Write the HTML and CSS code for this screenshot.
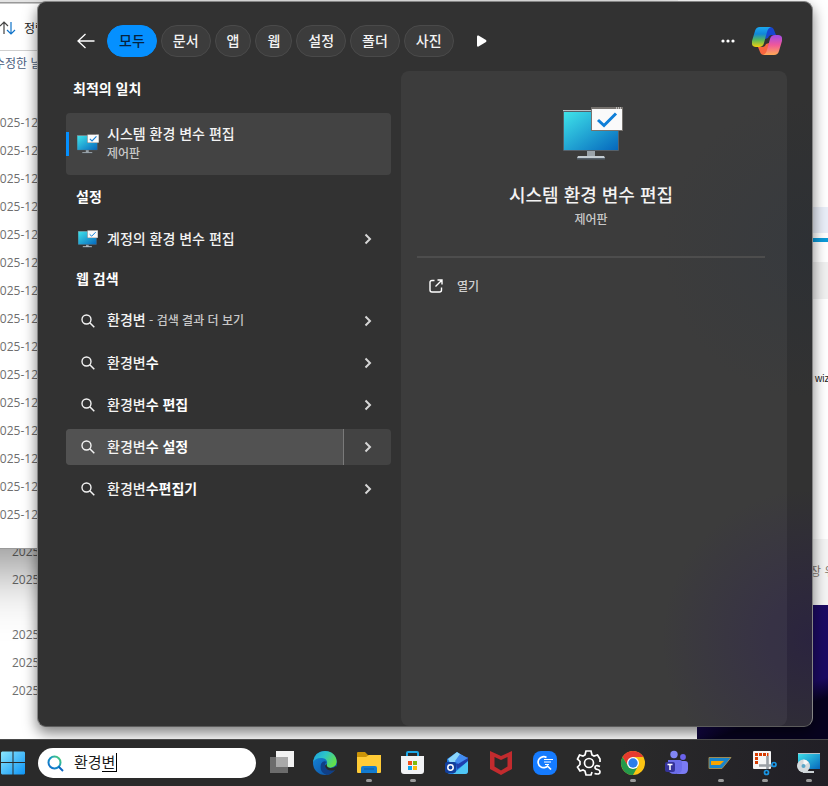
FILE: index.html
```html
<!DOCTYPE html>
<html lang="ko">
<head>
    <meta charset="UTF-8">
    <meta name="viewport" content="width=device-width, initial-scale=1.0">
    <title>검색</title>
    <link rel="stylesheet" href="styles.css">
</head>
<body>
    <!-- shared icons -->
    <svg class="sprite" aria-hidden="true">
        <defs>
            <linearGradient id="screenFill" x1="0" y1="0" x2="1" y2="1">
                <stop offset="0" stop-color="#3fe3ea"/>
                <stop offset="1" stop-color="#0567bd"/>
            </linearGradient>
        </defs>
        <symbol id="icon-monitor" viewBox="0 0 60 54">
            <rect x="24" y="43" width="8" height="7" fill="#9aa3aa"/>
            <path d="M15 49h26l1 2H14z" fill="#c3ccd3"/>
            <path d="M14 51h28v1.500H14z" fill="#55606a"/>
            <rect x="0" y="3" width="56" height="41" rx="1" fill="#55606a"/>
            <rect x="0" y="3" width="56" height="1" fill="#b9c0c5"/>
            <rect x="1" y="5" width="54" height="38" fill="url(#screenFill)"/>
            <rect x="28" y="0" width="32" height="24" fill="#77736f"/>
            <rect x="29" y="2" width="30" height="21" fill="#fafafa"/>
            <path d="M53 1h1M55 1h1M57 1h1" stroke="#fff"/>
            <path d="M35 13l6 5.500L53 6.500" fill="none" stroke="#0f7fd8" stroke-width="3"/>
        </symbol>
        <symbol id="icon-search" viewBox="0 0 14 14">
            <circle cx="5.500" cy="5.500" r="4.500" fill="none" stroke="currentColor" stroke-width="1.400"/>
            <path d="M8.800 8.800l4.500 4.500" stroke="currentColor" stroke-width="1.500"/>
        </symbol>
        <symbol id="icon-chevron" viewBox="0 0 8 12">
            <path d="M1.500 1.500L6 6l-4.500 4.500" fill="none" stroke="currentColor" stroke-width="2"/>
        </symbol>
    </svg>

    <div class="desktop">
        <main class="workspace">
            <!-- windows behind the search panel -->
            <section class="window window-back">
                <ul class="dates">
                    <li>2025-12</li>
                    <li>2025-12</li>
                </ul>
                <ul class="dates">
                    <li>2025-12</li>
                    <li>2025-12</li>
                    <li>2025-12</li>
                </ul>
            </section>
            <section class="window window-files">
                <div class="toolbar">
                    <svg width="18" height="14" viewBox="0 0 18 14" fill="none" stroke-width="1.200">
                        <path d="M5 13V1M1 5l4-4 4 4" stroke="#444"/>
                        <path d="M12 1v12M8 9l4 4 4-4" stroke="#0f73c9"/>
                    </svg>
                    <span>정렬</span>
                </div>
                <div class="column-title">수정한 날짜</div>
                <ul class="dates">
                    <li>2025-12</li>
                    <li>2025-12</li>
                    <li>2025-12</li>
                    <li>2025-12</li>
                    <li>2025-12</li>
                    <li>2025-12</li>
                    <li>2025-12</li>
                    <li>2025-12</li>
                    <li>2025-12</li>
                    <li>2025-12</li>
                    <li>2025-12</li>
                    <li>2025-12</li>
                    <li>2025-12</li>
                    <li>2025-12</li>
                    <li>2025-12</li>
                </ul>
            </section>
            <section class="window window-browser">
                <div class="address"></div>
                <div class="accent"></div>
                <div class="tabstrip"></div>
                <p class="page-text">wiz</p>
                <p class="status">장 위</p>
            </section>

            <section class="search-panel">
                <header class="panel-header">
                    <button class="icon-btn back" aria-label="뒤로">
                        <svg width="18" height="16" viewBox="0 0 18 16" fill="none" stroke="#fff" stroke-width="1.300"><path d="M17.500 8H1M8.500 1L1 8l7.500 7"/></svg>
                    </button>
                    <nav class="tabs">
                        <button class="tab active">모두</button>
                        <button class="tab">문서</button>
                        <button class="tab">앱</button>
                        <button class="tab">웹</button>
                        <button class="tab">설정</button>
                        <button class="tab">폴더</button>
                        <button class="tab">사진</button>
                    </nav>
                    <button class="icon-btn more-tabs" aria-label="더 보기">
                        <svg width="10" height="12" viewBox="0 0 10 12"><path d="M1.500.500L9 5q1 1 0 2l-7.500 4.500Q0 12 0 10.500v-9Q0 0 1.500.500z" fill="#fff"/></svg>
                    </button>
                    <button class="icon-btn options" aria-label="옵션">
                        <svg width="14" height="4" viewBox="0 0 14 4" fill="#fff"><circle cx="2" cy="2" r="1.600"/><circle cx="7" cy="2" r="1.600"/><circle cx="12" cy="2" r="1.600"/></svg>
                    </button>
                    <button class="icon-btn" aria-label="Copilot">
                        <svg width="30" height="28" viewBox="0 0 30 28">
                            <defs>
                                <linearGradient id="cpLeft" x1="0" y1="0" x2="0" y2="1">
                                    <stop offset="0" stop-color="#1ba8f0"/><stop offset=".35" stop-color="#1187d8"/>
                                    <stop offset=".65" stop-color="#57b85b"/><stop offset="1" stop-color="#f5cf0c"/>
                                </linearGradient>
                                <linearGradient id="cpRight" x1="0" y1="0" x2="0" y2="1">
                                    <stop offset="0" stop-color="#a04be8"/><stop offset=".5" stop-color="#f0589a"/>
                                    <stop offset="1" stop-color="#ffab55"/>
                                </linearGradient>
                            </defs>
                            <path d="M14 0h4q3 0 4 3l2 5h-4q-3 0-4 3l-3 1z" fill="#1746d0"/>
                            <path d="M16 28h-4q-3 0-4-3l-2-5h4q3 0 4-3l3-1z" fill="#f9663f"/>
                            <path d="M8 0h11q-3 1-4 5l-3 11q-1 4-5 4H4q-5 0-4-6L3 4q1-4 5-4z" fill="url(#cpLeft)"/>
                            <path d="M22 28H11q3-1 4-5l3-11q1-4 5-4h3q5 0 4 6l-3 10q-1 4-5 4z" fill="url(#cpRight)"/>
                        </svg>
                    </button>
                </header>

                <div class="panel-body">
                    <div class="results">
                        <h2>최적의 일치</h2>
                        <button class="best-match">
                            <span class="item-icon"><svg width="22" height="20"><use href="#icon-monitor"/></svg></span>
                            <span class="item-text">
                                <span class="item-name">시스템 환경 변수 편집</span>
                                <span class="item-type">제어판</span>
                            </span>
                        </button>

                        <h2 class="indent">설정</h2>
                        <ul class="result-list">
                            <li class="result">
                                <button class="result-main"><span class="item-icon"><svg width="20" height="18"><use href="#icon-monitor"/></svg></span><span class="item-name">계정의 환경 변수 편집</span></button>
                                <button class="result-more" aria-label="자세히"><svg width="8" height="12"><use href="#icon-chevron"/></svg></button>
                            </li>
                        </ul>

                        <h2 class="indent">웹 검색</h2>
                        <ul class="result-list">
                            <li class="result">
                                <button class="result-main"><span class="item-icon"><svg width="14" height="14"><use href="#icon-search"/></svg></span><span class="item-name">환경변<small> - 검색 결과 더 보기</small></span></button>
                                <button class="result-more" aria-label="자세히"><svg width="8" height="12"><use href="#icon-chevron"/></svg></button>
                            </li>
                            <li class="result">
                                <button class="result-main"><span class="item-icon"><svg width="14" height="14"><use href="#icon-search"/></svg></span><span class="item-name">환경변<b>수</b></span></button>
                                <button class="result-more" aria-label="자세히"><svg width="8" height="12"><use href="#icon-chevron"/></svg></button>
                            </li>
                            <li class="result">
                                <button class="result-main"><span class="item-icon"><svg width="14" height="14"><use href="#icon-search"/></svg></span><span class="item-name">환경변<b>수 편집</b></span></button>
                                <button class="result-more" aria-label="자세히"><svg width="8" height="12"><use href="#icon-chevron"/></svg></button>
                            </li>
                            <li class="result hovered">
                                <button class="result-main"><span class="item-icon"><svg width="14" height="14"><use href="#icon-search"/></svg></span><span class="item-name">환경변<b>수 설정</b></span></button>
                                <button class="result-more" aria-label="자세히"><svg width="8" height="12"><use href="#icon-chevron"/></svg></button>
                            </li>
                            <li class="result">
                                <button class="result-main"><span class="item-icon"><svg width="14" height="14"><use href="#icon-search"/></svg></span><span class="item-name">환경변<b>수편집기</b></span></button>
                                <button class="result-more" aria-label="자세히"><svg width="8" height="12"><use href="#icon-chevron"/></svg></button>
                            </li>
                        </ul>
                    </div>

                    <aside class="preview">
                        <svg class="preview-icon" width="60" height="54"><use href="#icon-monitor"/></svg>
                        <h1>시스템 환경 변수 편집</h1>
                        <p class="item-type">제어판</p>
                        <hr>
                        <button class="open-btn">
                            <svg width="14" height="14" viewBox="0 0 14 14" fill="none" stroke="#fff" stroke-width="1.400"><path d="M5.500 1.500H3Q1 1.500 1 3.500V11q0 2 2 2h7.500q2 0 2-2V8.500M8.500 1H13v4.500M13 1L6.500 7.500"/></svg>
                            열기
                        </button>
                    </aside>
                </div>
            </section>
        </main>

        <footer class="taskbar">
            <button class="start" aria-label="시작">
                <svg width="24" height="24" viewBox="0 0 24 24">
                    <defs><linearGradient id="startFill" x1="0" y1="0" x2="1" y2="1"><stop offset="0" stop-color="#8be6fd"/><stop offset="1" stop-color="#0d94f5"/></linearGradient></defs>
                    <path d="M1 .500h10.500V11H0V1.500zM12.500.500H23l1 1V11H12.500zM0 12h11.500v11.500H1l-1-1zM12.500 12H24v10.500l-1 1H12.500z" fill="url(#startFill)"/>
                </svg>
            </button>
            <label class="search-box">
                <svg width="17" height="17" viewBox="0 0 17 17" fill="none" stroke-width="2">
                    <defs><linearGradient id="lensFill" x1="1" y1="0" x2="0" y2="1"><stop offset="0" stop-color="#55d66b"/><stop offset=".5" stop-color="#1496c8"/><stop offset="1" stop-color="#1268c9"/></linearGradient></defs>
                    <circle cx="7.500" cy="7.500" r="6" stroke="url(#lensFill)"/>
                    <path d="M11.500 11.500L16 16" stroke="#0d65c2"/>
                </svg>
                <input type="text" value="환경변" aria-label="검색">
                <span class="composing"></span>
            </label>
            <div class="apps">
                <button class="app" aria-label="작업 보기">
                    <svg viewBox="0 0 26 26"><rect x="8" y="1" width="18" height="16" fill="#f2f2f2"/><rect x="2" y="7" width="18" height="16" fill="#6c6c6c"/><path d="M8 7h12v10H8z" fill="#a9a9a9"/></svg>
                </button>
                <button class="app" aria-label="Edge">
                    <svg viewBox="0 0 26 26">
                        <defs>
                            <linearGradient id="edgeTop" x1="0" y1="0" x2="1" y2=".5"><stop offset="0" stop-color="#1c9de0"/><stop offset=".5" stop-color="#2cc4c8"/><stop offset="1" stop-color="#62e04c"/></linearGradient>
                            <linearGradient id="edgeLow" x1="0" y1="0" x2="1" y2="1"><stop offset="0" stop-color="#1689dc"/><stop offset="1" stop-color="#0c4c9c"/></linearGradient>
                        </defs>
                        <circle cx="13" cy="13" r="12" fill="url(#edgeLow)"/>
                        <path d="M1 12Q3 1 13 1q8 0 11 7 2 6-2 8.500-3 2-7 .5-2-1 0-3 1-5-5-6Q4 7.500 1 12z" fill="url(#edgeTop)"/>
                        <path d="M9 14q-2 9 6 11 5-1 8.500-6Q15 22 13 15q0-2 1.500-3Q11 10 9 14z" fill="#103f86"/>
                        <path d="M15 14q-1 3 3 4 4 .500 6-2l2 3-3 1q-8 2-10-4 0-1 2-2z" fill="#2a2a2a"/>
                    </svg>
                </button>
                <button class="app running" aria-label="파일 탐색기">
                    <svg viewBox="0 0 26 26"><path d="M1 3q0-1 1-1h7l3 3h12q1 0 1 1v4H1z" fill="#cb9408"/><path d="M1 7h9l3-2h12v17q0 1-1 1H2q-1 0-1-1z" fill="#ffcb36"/><path d="M5 23v-5q0-2 2-2h12q2 0 2 2v5z" fill="#127bd0"/><path d="M8 19h10" stroke="#0e5a9f"/></svg>
                </button>
                <button class="app running" aria-label="Store">
                    <svg viewBox="0 0 26 26"><path d="M7 8V3q0-1 1-1h9q1 0 1 1v5" fill="none" stroke="#1ba7e8" stroke-width="2"/><path d="M1 6h23v15q0 3-3 3H4q-3 0-3-3z" fill="#f2f3f5"/><path d="M8 11h4v4H8z" fill="#f1511b"/><path d="M13 11h4v4h-4z" fill="#80bb0a"/><path d="M8 16h4v4H8z" fill="#0aa5ee"/><path d="M13 16h4v4h-4z" fill="#fbbc09"/></svg>
                </button>
                <button class="app" aria-label="Outlook">
                    <svg viewBox="0 0 26 26"><path d="M3 9L13 2l11 7v12q0 3-3 3H6q-3 0-3-3z" fill="#1d75dd"/><path d="M4 9l9-7 6 4-12 9z" fill="#8bd6fb"/><path d="M12 14l12-7v5L13 19z" fill="#1e3fae"/><path d="M24 11v10q0 3-3 3H9z" fill="#4fc6f4"/><path d="M16 4l8 4-10 6-3-3z" fill="#438cf0"/><rect x="1" y="12" width="11" height="11" rx="2" fill="#123f9c"/><circle cx="6.500" cy="17.500" r="2.700" fill="none" stroke="#fff" stroke-width="1.500"/></svg>
                </button>
                <button class="app" aria-label="McAfee">
                    <svg viewBox="0 0 26 26"><path d="M2 1l11 5 11-5v18l-11 6-11-6zM6.500 7v9.500l6.500 4 6.500-4V7L13 10z" fill="#c22b2e" fill-rule="evenodd"/></svg>
                </button>
                <button class="app" aria-label="빠른 검색">
                    <svg viewBox="0 0 26 26"><rect x="1" y="1" width="24" height="24" rx="8" fill="#157bff"/><path d="M14.500 7.500a5.500 5.500 0 1 0 1.500 8M15 15.500l4 4" fill="none" stroke="#fff" stroke-width="1.700"/><path d="M12 9.500h9M12 12h7M13 14.500h4" stroke="#fff" stroke-width="1.100"/></svg>
                </button>
                <button class="app" aria-label="설정 도구">
                    <svg viewBox="0 0 26 26" fill="none" stroke="#fff" stroke-width="1.700"><path d="M24 12V9l-2.500-4-3.500 1-2-1-1-4h-5L9 5 7 6 3.500 5 1.500 9 4 11.500v3L1.500 17l2.500 4 3-1 2 1 1 4h5l1-3"/><circle cx="13" cy="13" r="4.500"/><path d="M24 16.500q-5-2-5 1 0 1.500 2.500 2t2.500 2.500q0 3-5.500 1.500"/></svg>
                </button>
                <button class="app running" aria-label="Chrome">
                    <svg viewBox="0 0 26 26"><circle cx="13" cy="13" r="12" fill="#fbc413"/><path d="M13 1a12 12 0 0 0-10.400 6L8 16l5-9h10.400A12 12 0 0 0 13 1z" fill="#e53a2f"/><path d="M2.600 7A12 12 0 0 0 13 25l5-9-10 0z" fill="#24994a"/><circle cx="13" cy="13" r="6" fill="#fff"/><circle cx="13" cy="13" r="4.700" fill="#2b7de9"/></svg>
                </button>
                <button class="app" aria-label="Teams">
                    <svg viewBox="0 0 26 26"><circle cx="10" cy="4.500" r="3.700" fill="#8186f4"/><circle cx="19" cy="7" r="2.900" fill="#6b63ec"/><path d="M13 11h8q3 0 3 3v5q0 5-5 5h-6z" fill="#7b7bf2"/><path d="M4 10h12q2 0 2 2v6q0 6-7 6t-7-6z" fill="#6c6eea"/><rect x="1" y="12" width="10" height="10" rx="2" fill="#35339a"/><path d="M3.500 14.500h5M6 14.500V20" stroke="#fff" stroke-width="1.500"/></svg>
                </button>
                <button class="app running" aria-label="로컬 도구">
                    <svg viewBox="0 0 26 26"><path d="M1 7.500h22L14 18.500H1z" fill="#1884cb" stroke="#9b8a55"/><path d="M3 11h13l-4 4H3z" fill="#f5a400"/></svg>
                </button>
                <button class="app running" aria-label="캡처 도구">
                    <svg viewBox="0 0 26 26"><rect x="1" y="1" width="18" height="18" rx="1" fill="#f5f5f6"/><path d="M4.500 14V4.500h12" fill="none" stroke="#d83b01" stroke-width="3" stroke-dasharray="3 1"/><path d="M15.500 6v13M7 15.500h13" stroke="#9a9fa5" stroke-width="2.600"/><circle cx="22" cy="14.500" r="2" fill="none" stroke="#1996e5" stroke-width="1.700"/><circle cx="14.500" cy="22.500" r="2" fill="none" stroke="#1996e5" stroke-width="1.700"/></svg>
                </button>
                <button class="app running" aria-label="프로그램 설치">
                    <svg viewBox="0 0 26 26"><rect x="2" y="3" width="22" height="16" fill="url(#screenFill)"/><path d="M2 3.500h22" stroke="#b8c0c6"/><path d="M7 21h11v2H7z" fill="#ccd2d6"/><circle cx="7.500" cy="16" r="6.500" fill="#d5dadd"/><path d="M7.500 16V9.500a6.500 6.500 0 0 1 5 3z" fill="#f7f8f8"/><circle cx="7.500" cy="16" r="2" fill="#5ba6c7"/></svg>
                </button>
            </div>
        </footer>
    </div>
</body>
</html>
```

FILE: styles.css
```css
* {
    box-sizing: border-box;
}
body {
    margin: 0;
    font-family: "Noto Sans CJK KR", sans-serif;
    font-size: 14px;
    line-height: 20px;
    color: #f3f3f3;
}
h1, h2, p, ul {
    margin: 0;
    padding: 0;
}
ul {
    list-style: none;
}
button {
    font: inherit;
    color: inherit;
    background: none;
    border: none;
    padding: 0;
    cursor: pointer;
}
svg {
    display: block;
}
.sprite {
    position: absolute;
    width: 0;
    height: 0;
}
.desktop {
    display: flex;
    flex-direction: column;
    height: 100vh;
    overflow: hidden;
}
.workspace {
    position: relative;
    flex: 1;
    overflow: hidden;
    background: linear-gradient(160deg, #1d0a66 0%, #1b0a62 94%, #07031f 96%);
}

/* windows */
.window {
    position: absolute;
    overflow: hidden;
    background: #fff;
    color: #6e6e6e;
    font-size: 12px;
}
.window-back {
    top: 0;
    bottom: 0;
    left: 0;
    right: 131px;
    padding: 538px 0 0 12px;
}
.window-files {
    top: 3px;
    left: -107px;
    width: 785px;
    height: 545px;
    padding-left: 100px;
    border-top: 1px solid #c8c8c8;
    box-shadow: 0 0 0 1px #999, 0 20px 60px rgba(0, 0, 0, 0.45);
}
.window-browser {
    top: 0;
    right: 0;
    width: 150px;
    height: 605px;
    display: flex;
    flex-direction: column;
    padding-top: 207px;
}
.dates {
    font-family: "Open Sans", sans-serif;
    line-height: 28px;
}
.window-back .dates + .dates {
    margin-top: 27px;
}
.toolbar {
    display: flex;
    align-items: center;
    gap: 7px;
    height: 47px;
    padding: 2px 0 0 6px;
    border-bottom: 1px solid #d0d0d0;
    color: #222;
}
.column-title {
    height: 58px;
    padding: 2px 0 0 1px;
    color: #4b6080;
}
.address {
    height: 26px;
    background: #e9eef8;
}
.accent {
    height: 4px;
    margin: 5px 0 20px;
    background: #0b9ad8;
}
.tabstrip {
    height: 37px;
    background: #f0f0f0;
}
.page-text {
    margin-top: 70px;
    padding-left: 137px;
    font-family: "Liberation Sans", sans-serif;
    font-size: 10px;
    color: #222;
}
.status {
    margin-top: auto;
    height: 66px;
    padding: 22px 0 0 132px;
    background: #f4f4f4;
    color: #80756c;
    white-space: nowrap;
}

/* search panel */
.search-panel {
    position: absolute;
    top: 1px;
    right: 15px;
    bottom: 12px;
    left: 37px;
    display: flex;
    flex-direction: column;
    padding: 0 25px 0 28px;
    border: 1px solid #858585;
    border-bottom-color: #5c5c5c;
    border-radius: 9px;
    background:
        radial-gradient(circle at 100% 88%, #2b243f 0, rgba(43, 36, 63, 0) 150px),
        radial-gradient(circle at 100% 34%, #2d3034 0, rgba(45, 48, 52, 0) 150px),
        #323232;
    box-shadow: 0 6px 14px rgba(0, 0, 0, 0.5);
}
.panel-header {
    display: flex;
    align-items: center;
    height: 65px;
    padding: 12px 5px 0 11px;
    flex: none;
}
.icon-btn {
    display: flex;
    align-items: center;
    justify-content: center;
    flex: none;
}
.tabs {
    display: flex;
    gap: 4px;
    margin: 0 23px 0 12px;
}
.tab {
    height: 32px;
    padding: 0 11px 2px;
    border: 1px solid #4a4a4a;
    border-radius: 16px;
    background: #3c3c3c;
    font-weight: 500;
    white-space: nowrap;
}
.tab.active {
    background: #0590ff;
    border-color: #0590ff;
    color: #06233f;
}
.options {
    margin: 0 17px 0 auto;
}
.panel-body {
    display: grid;
    grid-template-columns: 325fr 386fr;
    gap: 10px;
    flex: 1;
    min-height: 0;
}
h2 {
    height: 46px;
    padding-left: 7px;
    font-size: 14px;
    line-height: 43px;
    font-weight: 700;
    color: #fff;
}
h2.indent {
    padding-left: 10px;
}
.best-match {
    display: flex;
    align-items: center;
    gap: 8px;
    width: 100%;
    height: 62px;
    padding-left: 11px;
    border-radius: 4px;
    background: linear-gradient(#0590ff, #0590ff) left center / 3px 24px no-repeat, #434343;
    text-align: left;
}
.item-icon {
    display: flex;
    justify-content: center;
    flex: none;
    width: 22px;
}
.item-text {
    display: flex;
    flex-direction: column;
    padding-bottom: 2px;
}
.item-name {
    font-weight: 500;
}
.item-name b {
    font-weight: 700;
    color: #fff;
}
.item-name small, .item-type {
    font-size: 12px;
    color: #c8c8c8;
}
.item-type {
    font-weight: 500;
}
.result-list {
    display: flex;
    flex-direction: column;
    gap: 6px;
}
.result {
    display: flex;
    height: 36px;
    border-radius: 4px;
    overflow: hidden;
}
.result-main {
    display: flex;
    align-items: center;
    gap: 8px;
    flex: 1;
    padding-left: 11px;
    text-align: left;
}
.result-main .item-name {
    padding-bottom: 3px;
}
.result-more {
    display: flex;
    align-items: center;
    justify-content: center;
    width: 48px;
    border-left: 1px solid transparent;
    color: #d6d6d6;
}
.result.hovered {
    background: #434343;
}
.hovered .result-main {
    background: #525252;
}
.hovered .result-more {
    border-left-color: #7a7a7a;
}

/* preview */
.preview {
    display: flex;
    flex-direction: column;
    align-items: center;
    margin-top: 4px;
    padding: 36px 22px 0 16px;
    border-radius: 8px;
    background: rgba(255, 255, 255, 0.05);
}
.preview-icon {
    margin-left: 4px;
}
.preview h1 {
    margin: 19px 0 1px;
    font-size: 18px;
    line-height: 28px;
    font-weight: 500;
}
.preview hr {
    width: 100%;
    height: 2px;
    margin: 27px 0 16px;
    border: none;
    background: #4d4d4d;
}
.open-btn {
    display: flex;
    align-items: center;
    gap: 14px;
    align-self: stretch;
    height: 24px;
    padding-left: 12px;
    font-size: 12px;
    font-weight: 500;
    color: #d0d0d0;
}

/* taskbar */
.taskbar {
    display: flex;
    align-items: center;
    flex: none;
    height: 47px;
    border-top: 1px solid #4a4a4a;
    background: linear-gradient(90deg, #2a2a2a 75%, #211f26 100%);
}
.start {
    flex: none;
    width: 24px;
    margin: 0 13px 0 1px;
}
.search-box {
    position: relative;
    display: flex;
    align-items: center;
    gap: 10px;
    flex: none;
    width: 218px;
    height: 30px;
    padding: 0 10px 0 9px;
    margin-right: 3px;
    border-radius: 15px;
    background: #fff;
}
.search-box input {
    flex: 1;
    min-width: 0;
    padding: 0 0 2px;
    border: none;
    outline: none;
    background: none;
    font: 15px/22px "Noto Sans CJK KR", sans-serif;
    color: #1b1b1b;
}
/* underline and caret of the syllable being typed */
.composing {
    position: absolute;
    top: 5px;
    left: 64px;
    width: 15px;
    height: 19px;
    border-right: 1px solid #000;
    border-bottom: 1px solid #000;
}
.apps {
    display: flex;
    flex: none;
}
.app {
    position: relative;
    display: flex;
    align-items: center;
    justify-content: center;
    width: 44px;
    height: 46px;
}
.app svg {
    width: 26px;
    height: 26px;
}
.app.running::after {
    content: "";
    position: absolute;
    left: 19px;
    bottom: 4px;
    width: 6px;
    height: 3px;
    border-radius: 2px;
    background: #9a9a9a;
}
```
